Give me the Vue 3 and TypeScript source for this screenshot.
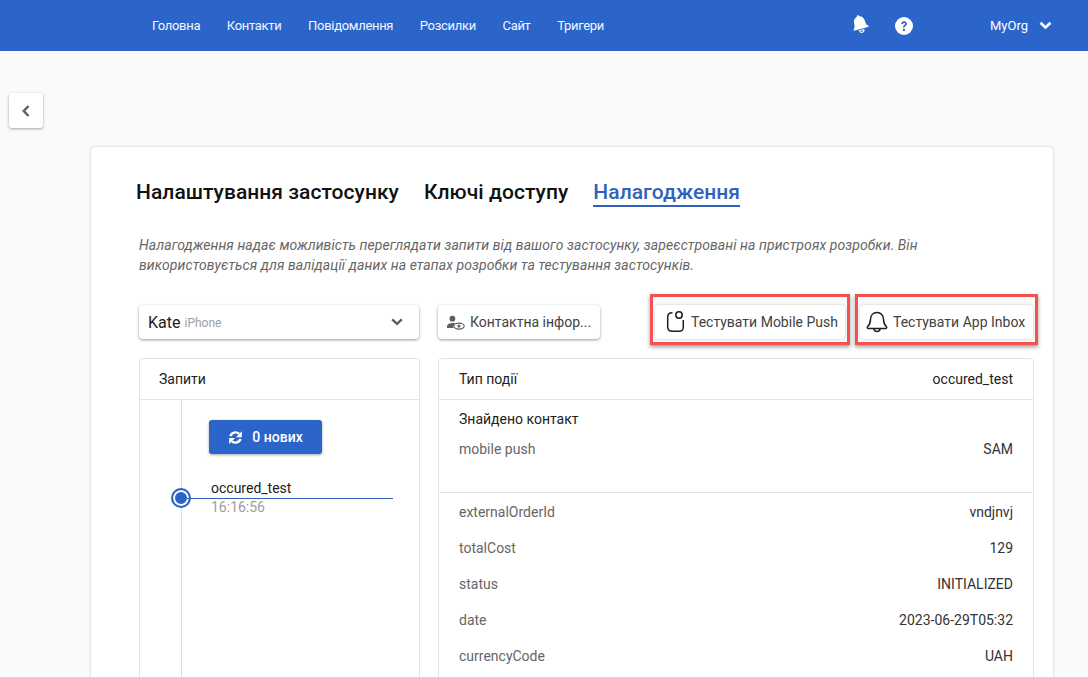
<script setup lang="ts">
const nav: string[] = ['Головна', 'Контакти', 'Повідомлення', 'Розсилки', 'Сайт', 'Тригери']
const rows: { k: string; v: string }[] = [
  { k: 'externalOrderId', v: 'vndjnvj' },
  { k: 'totalCost', v: '129' },
  { k: 'status', v: 'INITIALIZED' },
  { k: 'date', v: '2023-06-29T05:32' },
  { k: 'currencyCode', v: 'UAH' },
]
</script>

<template>
  <div class="page">
    <header class="top">
      <nav class="nav">
        <a v-for="n in nav" :key="n">{{ n }}</a>
      </nav>
      <div class="top-right">
        <svg class="bell" width="20" height="20" viewBox="0 0 20 20" fill="#fff">
          <g transform="rotate(-15 10 10)">
            <path d="M10 1c.8 0 1.3.6 1.3 1.3 2.6.6 4.2 2.8 4.2 5.500 0 3.600 1 4.900 2.200 6.200v1H2.300v-1c1.200-1.300 2.200-2.600 2.200-6.200 0-2.700 1.600-4.900 4.200-5.500C8.700 1.600 9.200 1 10 1z"/>
            <path d="M7.700 16.300h4.600a2.300 2.300 0 0 1-4.600 0z" fill="none" stroke="#fff" stroke-width="1"/>
          </g>
        </svg>
        <svg class="help" width="18" height="18" viewBox="0 0 18 18">
          <circle cx="9" cy="9" r="9" fill="#fff"/>
          <path d="M6.300 6.900C6.400 5.300 7.500 4.300 9.100 4.300c1.600 0 2.800 1 2.800 2.400 0 1.100-.6 1.700-1.400 2.200-.7.500-.9.800-.9 1.500H8c0-1.200.4-1.800 1.200-2.400.7-.5 1-.8 1-1.200 0-.5-.4-.9-1.100-.9-.7 0-1.100.4-1.200 1z" fill="#2b65c9"/>
          <circle cx="8.900" cy="13" r="1.150" fill="#2b65c9"/>
        </svg>
        <span class="org">MyOrg</span>
        <svg width="13" height="9" viewBox="0 0 13 9" fill="none" stroke="#fff" stroke-width="2.600">
          <path d="M1.500 1.700 6.500 6.500 11.500 1.700"/>
        </svg>
      </div>
    </header>

    <div class="back-row">
      <button class="back">
        <svg width="8" height="12" viewBox="0 0 8 12" fill="none" stroke="#5f5f5f" stroke-width="2.500">
          <path d="M6.500 1 1.800 6l4.700 5"/>
        </svg>
      </button>
    </div>

    <main class="card">
      <div class="tabs">
        <span class="tab">Налаштування застосунку</span>
        <span class="tab">Ключі доступу</span>
        <span class="tab active">Налагодження</span>
      </div>
      <p class="desc">
        Налагодження надає можливість переглядати запити від вашого застосунку, зареєстровані на пристроях розробки. Він<br />
        використовується для валідації даних на етапах розробки та тестування застосунків.
      </p>

      <div class="controls">
        <div class="select">
          <span class="sel-name">Kate</span>
          <span class="sel-sub">iPhone</span>
          <svg class="sel-arrow" width="12" height="8" viewBox="0 0 12 8" fill="none" stroke="#5f5f5f" stroke-width="2.400">
            <path d="M1.200 1.300 6 5.800l4.800-4.500"/>
          </svg>
        </div>
        <button class="btn contact">
          <svg width="18" height="15" viewBox="0 0 20 16">
            <circle cx="6" cy="3.800" r="3.200" fill="#5f5f5f"/>
            <path d="M0 14v-2c0-2 2.500-3.500 6-3.500 1.200 0 2.300.2 3.200.5-1 .9-1.800 2-2.200 3.200V14z" fill="#5f5f5f"/>
            <ellipse cx="13.300" cy="12" rx="5.800" ry="3.300" fill="none" stroke="#5f5f5f" stroke-width="1.300"/>
            <circle cx="13.300" cy="12" r="1.700" fill="#5f5f5f"/>
          </svg>
          <span>Контактна інфор...</span>
        </button>
        <div class="tests">
          <div class="mark first">
            <button class="btn test">
              <svg width="20" height="24" viewBox="0 0 20 24" fill="none" stroke="#1e1e1e" stroke-width="1.500">
                <path d="M7.500 2.700H6.700A4 4 0 0 0 2.700 6.700V17.300A4 4 0 0 0 6.700 21.300H14.300A4 4 0 0 0 18.300 17.300V10"/>
                <circle cx="14" cy="5" r="3.200"/>
              </svg>
              <span>Тестувати Mobile Push</span>
            </button>
          </div>
          <div class="mark">
            <button class="btn test">
              <svg width="22" height="22" viewBox="0 0 22 22" fill="none" stroke="#1e1e1e" stroke-width="1.500">
                <path d="M11 1.500c-4 0-6.500 3-6.500 6.800 0 3.700-1 5.700-3 7.500-.6.800 0 1.700.9 1.700h17.200c.9 0 1.500-.9.900-1.700-2-1.800-3-3.800-3-7.500 0-3.800-2.500-6.800-6.500-6.800z"/>
                <path d="M8 17.500c0 1.900 1.300 3 3 3s3-1.100 3-3"/>
              </svg>
              <span>Тестувати App Inbox</span>
            </button>
          </div>
        </div>
      </div>

      <div class="panels">
        <section class="panel left">
          <div class="panel-head"><span>Запити</span></div>
          <div class="timeline">
            <button class="refresh">
              <svg width="15" height="15" viewBox="0 0 16 16">
                <path d="M2.600 6.500A5.600 5.600 0 0 1 11.900 4.200" fill="none" stroke="#fff" stroke-width="2.600"/>
                <path d="M14.800 1.200V7.600H8.400z" fill="#fff"/>
                <path d="M13.400 9.500A5.600 5.600 0 0 1 4.100 11.800" fill="none" stroke="#fff" stroke-width="2.600"/>
                <path d="M1.200 14.800V8.400H7.600z" fill="#fff"/>
              </svg>
              <span>0 нових</span>
            </button>
            <div class="event">
              <span class="dot"></span>
              <span class="line"></span>
              <div class="ev-name">occured_test</div>
              <div class="ev-time">16:16:56</div>
            </div>
          </div>
        </section>

        <section class="panel right">
          <div class="panel-head between"><span>Тип події</span><span>occured_test</span></div>
          <div class="found">
            <div class="found-title">Знайдено контакт</div>
            <div class="row"><span class="k">mobile push</span><span class="v">SAM</span></div>
          </div>
          <div class="data">
            <div v-for="r in rows" :key="r.k" class="row"><span class="k">{{ r.k }}</span><span class="v">{{ r.v }}</span></div>
          </div>
        </section>
      </div>
    </main>
  </div>
</template>

<style scoped>
.page {
  height: 677px;
  overflow: hidden;
  background: #fafafa;
  font-family: Roboto, "Liberation Sans", sans-serif;
  font-size: 14px;
  color: #212121;
}
button { font-family: inherit; }
.top {
  height: 51px;
  background: #2b65c9;
  display: flex;
  align-items: center;
  padding-left: 152px;
  color: #fff;
}
.nav { display: flex; gap: 26.6px; font-size: 13px; letter-spacing: -0.3px; color: #f2f6ff; padding-bottom: 1px; }
.top-right { display: flex; align-items: center; margin-left: auto; padding-right: 36px; }
.bell { margin-right: 25px; margin-bottom: 4px; }
.help { margin-right: 77px; }
.org { font-size: 13px; margin-right: 11px; }
.back-row { padding: 42px 0 0 9px; height: 96px; box-sizing: border-box; }
.back {
  width: 34px;
  height: 35px;
  background: #fff;
  border: 0;
  border-radius: 3px;
  box-shadow: 0 1px 3px rgba(0,0,0,.35);
  display: flex;
  align-items: center;
  justify-content: center;
  padding: 0;
}
.card {
  margin: 0 35px 0 91px;
  background: #fff;
  border-radius: 4px;
  box-shadow: 0 0 3px rgba(0,0,0,.2);
  padding: 32px 18px 0 48px;
  height: 700px;
  box-sizing: border-box;
}
.tabs { display: flex; gap: 25px; margin-left: -3px; }
.tab { font-size: 21px; font-weight: 500; letter-spacing: 0.05px; line-height: 26px; color: #111; }
.tab.active { color: #2f62bd; border-bottom: 2px solid #2f62bd; }
.desc {
  margin: 28px 0 0;
  font-size: 14px;
  letter-spacing: 0.08px;
  font-style: italic;
  line-height: 20px;
  color: #666;
  white-space: nowrap;
}
.controls { display: flex; margin-top: 30px; height: 34px; position: relative; }
.select {
  flex: none;
  width: 280px;
  height: 34px;
  box-sizing: border-box;
  background: #fff;
  border-radius: 4px;
  box-shadow: 0 1px 3px rgba(0,0,0,.4);
  display: flex;
  align-items: center;
  padding: 0 16px 0 9px;
}
.sel-name { font-size: 16px; color: #222; }
.sel-sub { font-size: 12px; color: #9e9e9e; margin-left: 4px; padding-top: 2px; }
.sel-arrow { margin-left: auto; }
.btn {
  height: 34px;
  background: #fff;
  border: 0;
  border-radius: 4px;
  box-shadow: 0 1px 3px rgba(0,0,0,.4);
  display: flex;
  align-items: center;
  color: #424242;
  font-size: 14px;
  padding: 0;
  white-space: nowrap;
}
.contact { flex: none; width: 162px; margin-left: 19px; padding-left: 9px; gap: 5px; box-sizing: border-box; }
.tests { flex: none; display: flex; gap: 5px; margin-left: 50px; margin-top: -11px; }
.mark {
  height: 51px;
  box-sizing: border-box;
  border: 3px solid #ef5350;
  box-shadow: 0 2px 4px rgba(0,0,0,.4);
  padding: 8px 2px;
  background: #fafafa;
}
.mark.first { width: 200px; }
.mark:not(.first) { width: 183px; }
.test { width: 100%; box-shadow: 0 0 3px rgba(0,0,0,.2); padding-left: 10px; gap: 6px; box-sizing: border-box; }
.mark:not(.first) .test { padding-left: 6px; gap: 5px; }
.panels { display: flex; gap: 18px; margin-top: 19px; }
.panel {
  flex: none;
  border: 1px solid #e3e3e3;
  border-radius: 4px;
  height: 400px;
  box-sizing: border-box;
  background: #fff;
}
.panel.left { width: 281px; }
.panel.right { width: 596px; }
.panel-head {
  height: 40px;
  border-bottom: 1px solid #e3e3e3;
  display: flex;
  align-items: center;
  padding: 0 20px;
  color: #222;
}
.panel.left .panel-head { padding-left: 19px; }
.between { justify-content: space-between; }
.timeline { position: relative; height: 300px; padding: 20px 0 0 69px; }
.timeline::before {
  content: "";
  position: absolute;
  left: 41px;
  top: 0;
  bottom: 0;
  width: 1px;
  background: #dcdcdc;
}
.refresh {
  width: 113px;
  height: 34px;
  background: #2b65c9;
  color: #fff;
  border: 0;
  border-radius: 3px;
  box-shadow: 0 1px 3px rgba(0,0,0,.35);
  display: flex;
  align-items: center;
  justify-content: center;
  gap: 9px;
  font-size: 14px;
  font-weight: 500;
  padding: 0;
}
.event { position: relative; margin: 25px 26px 0 2px; }
.ev-name { line-height: 19px; }
.ev-time { line-height: 18px; color: #9e9e9e; }
.line {
  position: absolute;
  left: -30px;
  right: 0;
  top: 19px;
  height: 1px;
  background: #2f62bd;
}
.dot {
  position: absolute;
  left: -40px;
  top: 9px;
  width: 20px;
  height: 20px;
  box-sizing: border-box;
  border-radius: 50%;
  background: #2b65c9;
  border: 2px solid #2b65c9;
  box-shadow: inset 0 0 0 2px #fff;
}
.found { padding: 11px 20px 0; height: 93px; box-sizing: border-box; border-bottom: 1px solid #e3e3e3; }
.found-title { line-height: 17px; color: #222; margin-bottom: 13px; }
.row { display: flex; justify-content: space-between; line-height: 17px; }
.k { color: #666; }
.v { color: #333; }
.data { padding: 11px 20px 0; display: flex; flex-direction: column; gap: 19px; }
</style>
